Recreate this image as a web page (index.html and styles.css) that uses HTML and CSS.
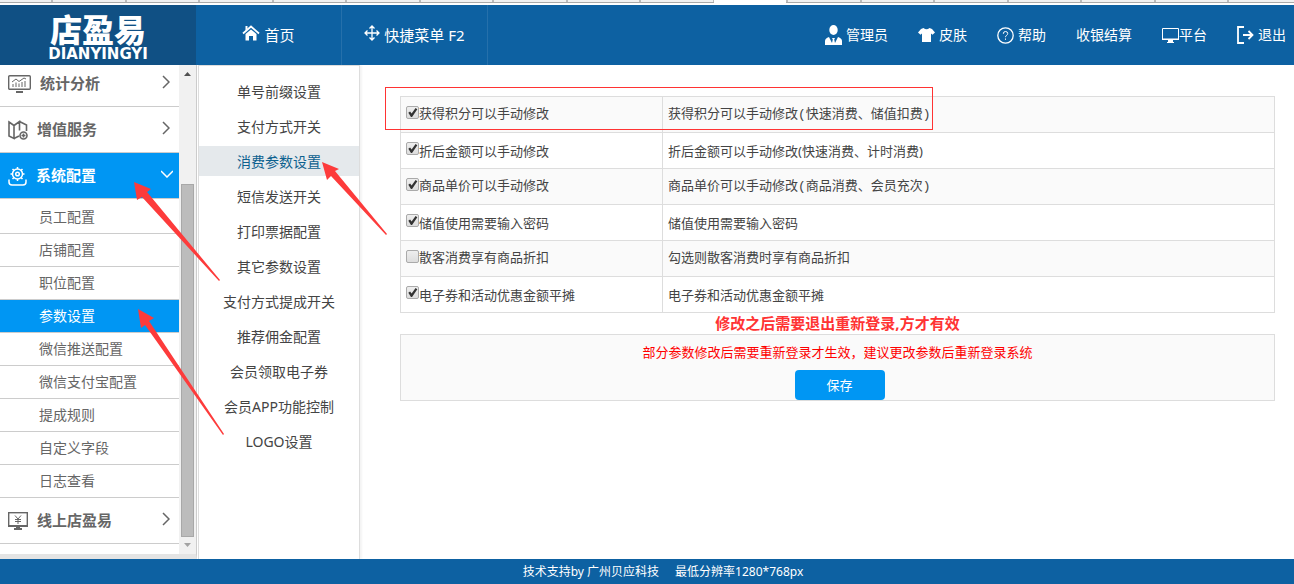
FILE: index.html
```html
<!DOCTYPE html>
<html lang="zh-CN">
<head>
<meta charset="utf-8">
<title>店盈易 - 消费参数设置</title>
<link rel="stylesheet" href="styles.css">
</head>
<body>
<div class="tabstrip"><div class="tab-current"></div></div>
<header class="header">
  <div class="logo">
    <span class="logo-cn">店盈易</span>
    <span class="logo-en">DIANYINGYI</span>
  </div>
  <nav class="main-nav">
    <a class="main-link" href="#">
      <svg width="18" height="16" viewBox="0 0 18 16"><path d="M1 8.5L9 1.5l8 7" fill="none" stroke="#fff" stroke-width="1.8"/><path d="M3.5 1h2v3l-2 1.6zM3.5 9L9 4.4 14.500 9v6.500H11V11H7v4.500H3.500z" fill="#fff"/></svg>
      首页
    </a>
    <a class="main-link" href="#">
      <svg width="16" height="16" viewBox="0 0 16 16" fill="none" stroke="#fff" stroke-width="1.300"><path d="M8 1v14M1 8h14M5.500 3.500L8 1l2.500 2.500M5.500 12.500L8 15l2.500-2.500M3.500 5.500L1 8l2.500 2.500M12.500 5.500L15 8l-2.500 2.500"/></svg>
      快捷菜单 F2
    </a>
  </nav>
  <nav class="user-nav">
    <a class="user-link" href="#">
      <svg width="17" height="20" viewBox="0 0 17 20" fill="#fff"><ellipse cx="8.500" cy="5" rx="4.200" ry="5"/><path d="M0 20v-4q0-2.500 4-4l3 6 .8-3.500-.8-1.500h3l-.8 1.500L10 18l3-6q4 1.500 4 4v4z"/></svg>
      管理员
    </a>
    <a class="user-link" href="#">
      <svg width="17" height="14" viewBox="0 0 17 14" fill="#fff"><path d="M5.500 0q3 2.500 6 0L14 1l3 3.500-2.500 2.200L13 5.500V14H4V5.500L2.500 6.700 0 4.500 3 1z"/></svg>
      皮肤
    </a>
    <a class="user-link" href="#">
      <svg width="17" height="17" viewBox="0 0 17 17" fill="none" stroke="#fff"><circle cx="8.500" cy="8.500" r="7.700" stroke-width="1.300"/><path d="M6.300 6.800q0-2.300 2.200-2.300t2.200 2q0 1.200-1.200 1.900-1 .6-1 1.800M8.500 11.500v1.300"/></svg>
      帮助
    </a>
    <a class="user-link" href="#">收银结算</a>
    <a class="user-link user-link-tight" href="#">
      <svg width="17" height="15" viewBox="0 0 17 15"><path d="M.5.500h16v11H.5z" fill="none" stroke="#fff"/><path d="M0 10.500h17V12h-6v2h1v1H5v-1h1v-2H0z" fill="#fff"/></svg>
      平台
    </a>
    <a class="user-link" href="#">
      <svg width="17" height="18" viewBox="0 0 17 18" fill="none" stroke="#fff" stroke-width="1.800"><path d="M7 1H1v16h6M6 9h9M11.500 5l4 4-4 4"/></svg>
      退出
    </a>
  </nav>
</header>

<div class="body">
  <aside class="sidebar">
    <div class="side-scroll">
      <nav class="side-menu">
        <a class="side-group" href="#">
          <svg width="23" height="18" viewBox="0 0 23 18" fill="none" stroke="#666"><rect x=".7" y=".7" width="21.600" height="13.600" rx="1" stroke-width="1.400"/><path d="M5 12V9M8 12V7.500M11 12V8.500M14 12V7M17 12V6M4 7l4-3 3 2.500L16 3l2 1"/><path d="M8 17h7" stroke-width="2"/></svg>
          <span class="side-title">统计分析</span>
          <svg class="chevron" width="8" height="14" viewBox="0 0 8 14"><path d="M1 1l6 6-6 6"/></svg>
        </a>
        <a class="side-group" href="#">
          <svg width="20" height="20" viewBox="0 0 20 20" fill="none" stroke="#666" stroke-width="1.600"><path d="M1 2l5 3.500V18.500L1 16zM6 18.500l5-2.500M6 5.500L11.500 1.500v9M11.500 1.500L18.500 5v6"/><circle cx="15.500" cy="15.500" r="3.500"/><path d="M13.500 15.500h4M15.500 13.500v4"/></svg>
          <span class="side-title">增值服务</span>
          <svg class="chevron" width="8" height="14" viewBox="0 0 8 14"><path d="M1 1l6 6-6 6"/></svg>
        </a>
        <a class="side-group side-group-open" href="#">
          <svg width="19" height="20" viewBox="0 0 19 20" fill="none" stroke="#fff" stroke-width="1.500"><circle cx="9.500" cy="8" r="5"/><circle cx="9.500" cy="8" r="1.800"/><path d="M9.500 1v2M9.500 13v2M2.500 8h2M14.500 8h2M4.500 3l1.400 1.400M13.100 11.600l1.400 1.400M4.500 13l1.400-1.400M13.100 4.400L14.500 3"/><path d="M1 13.500V16q0 3 3 3h11q3 0 3-3v-2.500"/></svg>
          <span class="side-title">系统配置</span>
          <svg class="chevron" width="12" height="8" viewBox="0 0 12 8"><path d="M0 1l6 6 6-6"/></svg>
        </a>
        <div class="side-items">
          <a class="side-item" href="#">员工配置</a>
          <a class="side-item" href="#">店铺配置</a>
          <a class="side-item" href="#">职位配置</a>
          <a class="side-item side-item-active" href="#">参数设置</a>
          <a class="side-item" href="#">微信推送配置</a>
          <a class="side-item" href="#">微信支付宝配置</a>
          <a class="side-item" href="#">提成规则</a>
          <a class="side-item" href="#">自定义字段</a>
          <a class="side-item" href="#">日志查看</a>
        </div>
        <a class="side-group" href="#">
          <svg width="20" height="18" viewBox="0 0 20 18" fill="none" stroke="#666"><rect x=".7" y=".7" width="18.600" height="13" stroke-width="1.400"/><path d="M0 14h20M6 17h8" stroke-width="2"/><path d="M10 14v3" stroke-width="4"/><path d="M7 3.500l3 3.500 3-3.500M10 7v5M7 7.500h6M7 9.500h6"/></svg>
          <span class="side-title">线上店盈易</span>
          <svg class="chevron" width="8" height="14" viewBox="0 0 8 14"><path d="M1 1l6 6-6 6"/></svg>
        </a>
      </nav>
      <div class="scrollbar">
        <svg width="7" height="4" viewBox="0 0 7 4"><path d="M0 4l3.500-4L7 4z" fill="#505050"/></svg>
        <div class="thumb"></div>
        <svg width="7" height="4" viewBox="0 0 7 4"><path d="M0 0h7L3.500 4z" fill="#a3a3a3"/></svg>
      </div>
    </div>
  </aside>

  <nav class="subnav">
    <a class="sub-link" href="#">单号前缀设置</a>
    <a class="sub-link" href="#">支付方式开关</a>
    <a class="sub-link sub-link-active" href="#">消费参数设置</a>
    <a class="sub-link" href="#">短信发送开关</a>
    <a class="sub-link" href="#">打印票据配置</a>
    <a class="sub-link" href="#">其它参数设置</a>
    <a class="sub-link" href="#">支付方式提成开关</a>
    <a class="sub-link" href="#">推荐佣金配置</a>
    <a class="sub-link" href="#">会员领取电子券</a>
    <a class="sub-link" href="#">会员APP功能控制</a>
    <a class="sub-link" href="#">LOGO设置</a>
  </nav>

  <main class="content">
    <table class="params">
      <tbody>
        <tr><td class="param-name"><label class="check"><input type="checkbox" checked>获得积分可以手动修改</label></td><td>获得积分可以手动修改(快速消费、储值扣费)</td></tr>
        <tr><td class="param-name"><label class="check"><input type="checkbox" checked>折后金额可以手动修改</label></td><td>折后金额可以手动修改(快速消费、计时消费)</td></tr>
        <tr><td class="param-name"><label class="check"><input type="checkbox" checked>商品单价可以手动修改</label></td><td>商品单价可以手动修改(商品消费、会员充次)</td></tr>
        <tr><td class="param-name"><label class="check"><input type="checkbox" checked>储值使用需要输入密码</label></td><td>储值使用需要输入密码</td></tr>
        <tr><td class="param-name"><label class="check"><input type="checkbox">散客消费享有商品折扣</label></td><td>勾选则散客消费时享有商品折扣</td></tr>
        <tr><td class="param-name"><label class="check"><input type="checkbox" checked>电子券和活动优惠金额平摊</label></td><td>电子券和活动优惠金额平摊</td></tr>
      </tbody>
    </table>
    <p class="notice">修改之后需要退出重新登录,方才有效</p>
    <div class="save-box">
      <p class="hint">部分参数修改后需要重新登录才生效，建议更改参数后重新登录系统</p>
      <button class="save" type="button">保存</button>
    </div>
    <div class="highlight"></div>
  </main>
</div>

<footer class="footer"><span>技术支持by 广州贝应科技</span><span>最低分辨率1280*768px</span></footer>

<svg class="arrows" width="400" height="450" viewBox="0 0 400 450" fill="#fd3b3b">
  <path d="M134 182L151 189 147 192 220 280 219 281 142 197 137 200z"/>
  <path d="M138 309L154 318 149 321 224 434 223 435 145 325 141 328z"/>
  <path d="M322 162L339 169 335 171 387 234 386 235 331 176 327 180z"/>
</svg>
</body>
</html>
```
FILE: styles.css
```css
* { box-sizing: border-box; }

body {
  position: relative;
  display: flex;
  flex-direction: column;
  min-height: 100vh;
  margin: 0;
  background: #fff;
  color: #444;
  font: 14px/20px "Noto Sans", "Noto Sans CJK SC", sans-serif;
}

a { color: inherit; text-decoration: none; }
p { margin: 0; }
svg { flex: none; display: block; }

.tabstrip {
  height: 3px;
  margin-bottom: 2px;
  border-bottom: 1px solid #aaa;
  background: #f1f1f1 linear-gradient(90deg, #bbb 0 2px, #f1f1f1 2px 73px, #bbb 73px 75px, #f1f1f1 75px) 125px 0 / 147px 2px repeat-x;
}

.tab-current {
  width: 72px;
  height: 3px;
  margin-left: 714px;
  background: #fff;
}

/* Header */
.header {
  display: flex;
  height: 60px;
  background: #0d61a2;
  color: #fff;
}

.logo {
  display: flex;
  flex-direction: column;
  align-items: center;
  width: 196px;
  padding-top: 4px;
  background: #105084;
}

.logo-cn {
  font: 900 32px/38px "Noto Sans CJK SC", sans-serif;
}

.logo-en {
  font: bold 15px/14px "DejaVu Sans", sans-serif;
}

.main-nav { display: flex; }

.main-link {
  display: flex;
  align-items: center;
  justify-content: center;
  gap: 4px;
  width: 146px;
  border-right: 1px solid #2570ab;
  font-size: 15px;
}

.main-link svg { margin-bottom: 4px; }

.user-nav {
  display: flex;
  gap: 30px;
  margin-left: auto;
  padding-right: 8px;
}

.user-link {
  display: flex;
  align-items: center;
  gap: 4px;
}

.user-link-tight { gap: 0; }

/* Columns */
.body {
  display: flex;
  flex: 1;
  overflow: hidden;
}

.sidebar {
  display: flex;
  flex-direction: column;
  width: 197px;
  border-right: 1px solid #ccc;
  border-bottom: 5px solid #e4e4e4;
}

.side-scroll {
  display: flex;
  flex: 1;
  overflow: hidden;
}

.side-menu {
  flex: 1;
  margin-top: -4px;
}

.side-group {
  display: flex;
  align-items: center;
  gap: 9px;
  height: 46px;
  padding: 0 9px 0 8px;
  border-bottom: 1px solid #ccc;
  color: #666;
  font-size: 15px;
  font-weight: bold;
}

.side-group-open {
  padding-right: 6px;
  background: #0096f3;
  color: #fff;
}

.side-title { padding-bottom: 2px; }

.chevron {
  margin: 0 0 3px auto;
  fill: none;
  stroke: currentColor;
  stroke-width: 1.5;
}

.side-items { padding-top: 2px; }

.side-item {
  display: block;
  height: 33px;
  padding-left: 39px;
  border-bottom: 1px solid #ccc;
  color: #666;
  line-height: 32px;
}

.side-item-active {
  background: #0096f3;
  color: #fff;
}

.scrollbar {
  display: flex;
  flex-direction: column;
  align-items: center;
  width: 17px;
  padding: 7px 2px;
  background: #f1f1f1;
}

.thumb {
  flex: 1;
  width: 13px;
  margin: 108px 0 6px;
  border: 1px solid #a8a8a8;
  background: #bcbcbc;
}

.subnav {
  display: flex;
  flex-direction: column;
  gap: 5px;
  width: 162px;
  margin-left: 1px;
  padding-top: 10px;
  border: solid #ddd;
  border-width: 1px 1px 0;
  box-shadow: 2px 0 2px #f4f4f4;
  text-align: center;
}

.sub-link {
  height: 30px;
  line-height: 32px;
}

.sub-link-active {
  background: #e5e9ec;
  color: #0d618f;
}

/* Parameters */
.content {
  position: relative;
  flex: 1;
  padding: 31px 19px 0 40px;
}

.params {
  width: 100%;
  border-collapse: collapse;
  table-layout: fixed;
  font-size: 13px;
}

.params td {
  height: 36px;
  padding: 0 5px;
  border: 1px solid #ddd;
}

.params .param-name { width: 262px; }

.params tr:nth-child(odd) {
  background: #fafafa;
  font-family: "Liberation Mono", "Noto Sans CJK SC", monospace;
}

.check {
  display: flex;
  align-items: center;
}

.check input {
  appearance: none;
  width: 13px;
  height: 13px;
  margin: 0 0 4px;
  border: 1px solid #aaa;
  border-radius: 2px;
  background: linear-gradient(#eee, #ddd);
}

.check input:checked::after {
  content: "";
  display: block;
  width: 11px;
  height: 11px;
  background: #333;
  clip-path: polygon(12% 52%, 28% 40%, 42% 58%, 78% 8%, 94% 20%, 46% 90%, 36% 90%);
}

.notice {
  color: #ff3333;
  font-size: 15px;
  font-weight: bold;
  line-height: 21px;
  text-align: center;
}

.save-box {
  display: flex;
  flex-direction: column;
  align-items: center;
  border: 1px solid #ddd;
  background: #fafafa;
}

.hint {
  color: #f00;
  font-size: 13px;
  line-height: 35px;
}

.save {
  width: 90px;
  height: 30px;
  margin-left: 4px;
  padding: 0;
  border: 0;
  border-radius: 4px;
  background: #0096f3;
  color: #fff;
  font: inherit;
  font-size: 13px;
}

.highlight {
  position: absolute;
  top: 22px;
  left: 25px;
  width: 548px;
  height: 43px;
  border: 1px solid #f33;
}

.footer {
  display: flex;
  align-items: center;
  justify-content: center;
  gap: 16px;
  height: 25px;
  padding-left: 32px;
  background: #0d61a2;
  color: #fff;
  font-size: 12px;
}

.arrows {
  position: absolute;
  top: 0;
  left: 0;
  pointer-events: none;
}
```
